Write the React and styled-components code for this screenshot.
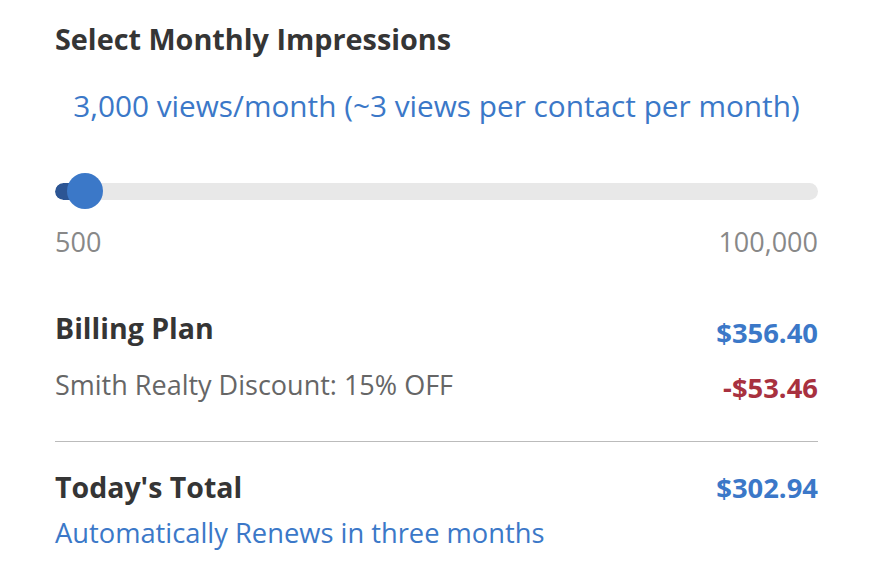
import styled, { createGlobalStyle } from "styled-components";

const GlobalStyle = createGlobalStyle`
  body {
    margin: 0;
    background: #fff;
    font-family: "Open Sans", "Noto Sans", sans-serif;
  }
`;

const Panel = styled.div`
  width: 763px;
  padding: 19px 0 0 55px;
  color: #333;
`;

const Heading = styled.h2`
  margin: 0;
  font-size: 28.8px;
  font-weight: 700;
  line-height: 40px;
  color: #353535;
`;

const Views = styled.div`
  margin-top: 27px;
  text-align: center;
  font-size: 29.75px;
  line-height: 40px;
  color: #3b78c8;
`;

const SliderWrap = styled.div`
  margin-top: 47px;
  position: relative;
  height: 36px;
  display: flex;
  align-items: center;
`;

const Track = styled.div`
  width: 100%;
  height: 17px;
  border-radius: 9px;
  background: #e8e8e8;
  overflow: hidden;
`;

const Fill = styled.div`
  height: 100%;
  background: #2c5594;
  border-radius: 9px;
`;

const Thumb = styled.div`
  position: absolute;
  top: 0;
  width: 36px;
  height: 36px;
  border-radius: 50%;
  background: #3b78c8;
  transform: translateX(-50%);
`;

const Range = styled.div`
  margin-top: 15px;
  display: flex;
  justify-content: space-between;
  font-size: 27px;
  line-height: 36px;
  color: #888;
`;

const Row = styled.div`
  display: flex;
  justify-content: space-between;
  align-items: ${(p) => (p.baseline ? "baseline" : "flex-start")};
  margin-top: ${(p) => p.gap || 0}px;
`;

const Label = styled.div`
  font-size: 28.5px;
  font-weight: 700;
  line-height: 40px;
  color: #353535;
`;

const Note = styled.div`
  font-size: 27px;
  line-height: 36px;
  color: #666;
`;

const Amount = styled.div`
  padding-top: ${(p) => p.drop || 0}px;
  font-size: 27.4px;
  font-weight: 700;
  line-height: ${(p) => p.lh || 40}px;
  color: ${(p) => (p.negative ? "#a8313f" : "#3b78c8")};
`;

const Divider = styled.hr`
  margin: 35px 0 0;
  border: 0;
  border-top: 1px solid #bbb;
`;

const Renew = styled.div`
  margin-top: 7px;
  font-size: 27.3px;
  line-height: 36px;
  color: #3b78c8;
`;

export default function App() {
  const fillWidth = 30;
  return (
    <>
      <GlobalStyle />
      <Panel>
        <Heading>Select Monthly Impressions</Heading>
        <Views>3,000 views/month (~3 views per contact per month)</Views>
        <SliderWrap>
          <Track>
            <Fill style={{ width: fillWidth }} />
          </Track>
          <Thumb style={{ left: fillWidth }} />
        </SliderWrap>
        <Range>
          <span>500</span>
          <span>100,000</span>
        </Range>
        <Row gap={48}>
          <Label>Billing Plan</Label>
          <Amount drop={5}>$356.40</Amount>
        </Row>
        <Row gap={14}>
          <Note>Smith Realty Discount: 15% OFF</Note>
          <Amount negative drop={3} lh={36}>
            -$53.46
          </Amount>
        </Row>
        <Divider />
        <Row gap={25} baseline>
          <Label>Today's Total</Label>
          <Amount>$302.94</Amount>
        </Row>
        <Renew>Automatically Renews in three months</Renew>
      </Panel>
    </>
  );
}
